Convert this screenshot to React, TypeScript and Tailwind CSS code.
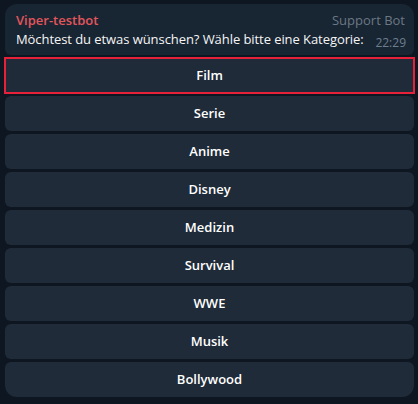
import React from "react";

const buttons = ["Film", "Serie", "Anime", "Disney", "Medizin", "Survival", "WWE", "Musik", "Bollywood"];

export default function App() {
  return (
    <div
      className="w-[418px] h-[404px] bg-[#0e1621] pt-[4px] pl-[5px] pr-[4px]"
      style={{ fontFamily: '"Open Sans", "Liberation Sans", sans-serif' }}
    >
      <div className="relative bg-[#182533] rounded-t-[12px] rounded-b-[6px] pl-[11px] pr-[9px] pt-[7px] pb-[7px]">
        <div className="flex justify-between items-center text-[13px] leading-[19px]">
          <span className="font-semibold text-[#e4565c]">Viper-testbot</span>
          <span className="text-[#6c7883]">Support Bot</span>
        </div>
        <div className="text-[13px] leading-[18px] tracking-[-0.07px] text-[#f5f5f5]">
          Möchtest du etwas wünschen? Wähle bitte eine Kategorie:
        </div>
        <span className="absolute right-[8px] bottom-[4px] text-[12px] leading-[16px] text-[#6d7f8f]">22:29</span>
      </div>
      <div className="flex flex-col gap-[3px] mt-[3px]">
        {buttons.map((b, i) => (
          <div
            key={b}
            className={
              "h-[35px] flex items-center justify-center bg-[#1f2b38] text-white text-[13px] font-semibold " +
              (i === buttons.length - 1 ? "rounded-t-[6px] rounded-b-[12px]" : "rounded-[6px]") +
              (i === 0 ? " outline-2 outline-[#e8213b] outline-offset-[-1px] rounded-none" : "")
            }
          >
            {b}
          </div>
        ))}
      </div>
    </div>
  );
}
